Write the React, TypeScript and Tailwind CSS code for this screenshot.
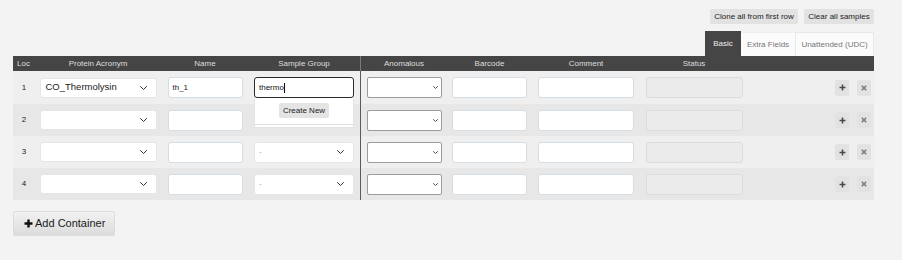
import React from "react";

const Chevron = ({ w = 7, h = 4, color = "#333", sw = 1 }: { w?: number; h?: number; color?: string; sw?: number }) => (
  <svg width={w} height={h} viewBox={`0 0 ${w} ${h}`} fill="none">
    <path d={`M0.5 0.5 L${w / 2} ${h - 0.5} L${w - 0.5} 0.5`} stroke={color} strokeWidth={sw} strokeLinecap="round" strokeLinejoin="round" />
  </svg>
);

const ProteinSelect = ({ value }: { value?: string }) => (
  <div className="w-[117px] h-[20px] bg-white border border-[#e6e6e6] rounded-[3px] flex items-center justify-between pl-[5px] pr-[9px] text-[9.5px] text-[#1a1a1a]">
    <span>{value ?? ""}</span>
    <Chevron />
  </div>
);

const TextInput = ({ value, w = 75 }: { value?: string; w?: number }) => (
  <div
    className="h-[21px] bg-white border border-[#d5dde5] rounded-[3px] flex items-center pl-[4px] text-[8px] text-[#222]"
    style={{ width: w }}
  >
    {value ?? ""}
  </div>
);

const GroupSelect = () => (
  <div className="w-[100px] h-[21px] bg-white border border-[#e6e6e6] rounded-[3px] flex items-center justify-between pl-[4px] pr-[9px] text-[8px] text-[#aaa]">
    <span>-</span>
    <Chevron />
  </div>
);

const AnomSelect = () => (
  <div className="w-[75px] h-[21px] bg-white border border-[#9c9c9c] rounded-[2px] flex items-center justify-end pr-[3px]">
    <Chevron w={5} h={3} color="#555" sw={1} />
  </div>
);

const StatusInput = () => <div className="w-[97px] h-[21px] bg-[#ebebeb] border border-[#d7dde3] rounded-[3px]" />;

const ActionButtons = () => (
  <div className="flex items-center gap-[8px] pr-[3px]">
    <div className="w-[14px] h-[16px] bg-[#e2e2e2] rounded-[2px] flex items-center justify-center">
      <svg width="7" height="7" viewBox="0 0 7 7">
        <path d="M3.5 0.5 V6.5 M0.5 3.5 H6.5" stroke="#4a4a4a" strokeWidth="1.6" />
      </svg>
    </div>
    <div className="w-[14px] h-[16px] bg-[#e2e2e2] rounded-[2px] flex items-center justify-center">
      <svg width="6" height="6" viewBox="0 0 6 6">
        <path d="M0.8 0.8 L5.2 5.2 M5.2 0.8 L0.8 5.2" stroke="#777" strokeWidth="1.5" />
      </svg>
    </div>
  </div>
);

type Row = { loc: number; protein?: string; name?: string; group: "active" | "hidden" | "select" };

const rows: Row[] = [
  { loc: 1, protein: "CO_Thermolysin", name: "th_1", group: "active" },
  { loc: 2, group: "hidden" },
  { loc: 3, group: "select" },
  { loc: 4, group: "select" },
];

export default function App() {
  return (
    <div className="w-full min-h-screen bg-[#f3f3f3] px-[13px] pt-[9px] font-['Liberation_Sans',Arial,sans-serif]">
      <div className="w-[861px]">
        {/* top buttons */}
        <div className="flex justify-end gap-[6px]">
          <div className="w-[88px] h-[15px] bg-[#e2e2e2] rounded-[2px] flex items-center justify-center text-[8px] text-[#222]">
            Clone all from first row
          </div>
          <div className="w-[70px] h-[15px] bg-[#e2e2e2] rounded-[2px] flex items-center justify-center text-[8px] text-[#222]">
            Clear all samples
          </div>
        </div>
        {/* tabs */}
        <div className="flex justify-end items-end mt-[7px] h-[25px]">
          <div className="w-[36px] h-[25px] bg-[#454545] text-[#eeeeee] text-[8px] flex items-center justify-center">Basic</div>
          <div className="w-[54px] h-[24px] bg-[#fbfbfb] text-[#777] text-[8px] flex items-center justify-center border-t border-[#eeeeee]">
            Extra Fields
          </div>
          <div className="w-[79px] h-[24px] bg-[#fbfbfb] text-[#777] text-[8px] flex items-center justify-center border-l border-t border-r border-[#e8e8e8]">
            Unattended (UDC)
          </div>
        </div>
        {/* table */}
        <div className="flex h-[15px] bg-[#454545] text-[#dedede] text-[8px] items-center">
          <div className="w-[21px] text-center">Loc</div>
          <div className="w-[128px] text-center">Protein Acronym</div>
          <div className="w-[86px] text-center">Name</div>
          <div className="w-[112px] text-center">Sample Group</div>
          <div className="w-[87px] h-full flex items-center justify-center border-l border-[#7a7a7a]">Anomalous</div>
          <div className="w-[85px] text-center">Barcode</div>
          <div className="w-[108px] text-center">Comment</div>
          <div className="w-[108px] text-center">Status</div>
          <div className="w-[126px]" />
        </div>
        {rows.map((r, i) => (
          <div
            key={r.loc}
            className={`flex items-center text-[8px] text-[#222] ${i === 0 ? "h-[33px]" : "h-[32px]"} ${i % 2 === 0 ? "bg-[#efefef]" : "bg-[#e7e7e7]"}`}
          >
            <div className="w-[21px] text-center pl-[1px]">{r.loc}</div>
            <div className="w-[128px] flex justify-center">
              <ProteinSelect value={r.protein} />
            </div>
            <div className="w-[86px] flex justify-center">
              <TextInput value={r.name} />
            </div>
            <div className="w-[112px] flex justify-center relative z-10">
              {r.group === "active" ? (
                <div className="relative">
                  <div className="w-[100px] h-[21px] bg-white border-[1.5px] border-[#2a2a2a] rounded-[3px] flex items-center pl-[4px] text-[8px] text-[#111]">
                    thermo
                    <span className="inline-block w-[1px] h-[10px] bg-[#111]" />
                  </div>
                  <div className="absolute left-0 top-full w-[100px] bg-white border-l border-r border-b border-[#e4e4e4]">
                    <div className="flex justify-center pt-[5px] pb-[6px]">
                      <div className="w-[50px] h-[15px] bg-[#e4e4e4] rounded-[2px] flex items-center justify-center text-[8px] text-[#222]">
                        Create New
                      </div>
                    </div>
                    <div className="h-[3px] border-t border-[#dddddd]" />
                  </div>
                </div>
              ) : r.group === "select" ? (
                <GroupSelect />
              ) : (
                <div className="w-[100px] h-[21px]" />
              )}
            </div>
            <div className="w-[87px] h-full flex items-center justify-center border-l border-[#5a5a5a]">
              <AnomSelect />
            </div>
            <div className="w-[85px] flex justify-center">
              <TextInput />
            </div>
            <div className="w-[108px] flex justify-center">
              <TextInput w={96} />
            </div>
            <div className="w-[108px] flex justify-center">
              <StatusInput />
            </div>
            <div className="w-[126px] flex justify-end">
              <ActionButtons />
            </div>
          </div>
        ))}
        {/* add container */}
        <div className="mt-[11px] w-[102px] h-[25px] rounded-[2px] border border-[#dcdcdc] bg-gradient-to-b from-[#f2f2f2] to-[#dcdcdc] flex items-center pl-[10px] gap-[2px] text-[11px] text-[#1a1a1a]">
          <svg width="9" height="9" viewBox="0 0 9 9">
            <path d="M4.5 0.5 V8.5 M0.5 4.5 H8.5" stroke="#111" strokeWidth="2.4" />
          </svg>
          <span>Add Container</span>
        </div>
      </div>
    </div>
  );
}
